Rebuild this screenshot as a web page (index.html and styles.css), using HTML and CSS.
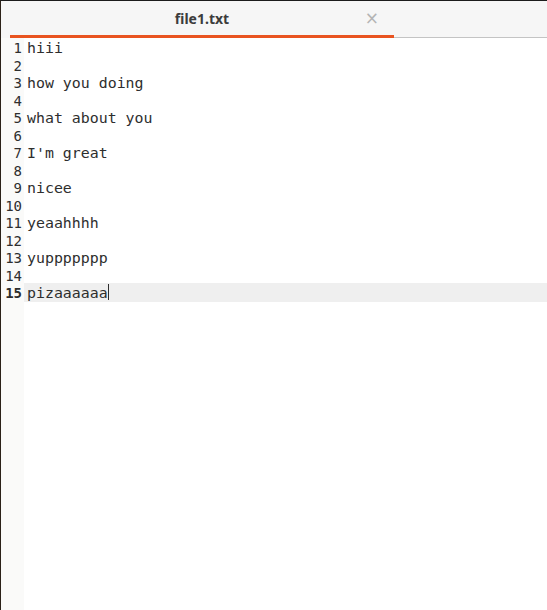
FILE: index.html
```html
<!DOCTYPE html>
<html>
<head>
<meta charset="utf-8">
<link rel="stylesheet" href="styles.css">
</head>
<body>
<div class="window">
  <div class="tabbar">
    <div class="tab">
      <span class="tab-title">file1.txt</span>
      <span class="tab-close">×</span>
    </div>
    <div class="tab-rest"></div>
  </div>
  <div class="editor">
    <div class="gutter">
      <div class="ln">1</div>
      <div class="ln">2</div>
      <div class="ln">3</div>
      <div class="ln">4</div>
      <div class="ln">5</div>
      <div class="ln">6</div>
      <div class="ln">7</div>
      <div class="ln">8</div>
      <div class="ln">9</div>
      <div class="ln">10</div>
      <div class="ln">11</div>
      <div class="ln">12</div>
      <div class="ln">13</div>
      <div class="ln">14</div>
      <div class="ln current">15</div>
    </div>
    <div class="text">
      <div class="line">hiii</div>
      <div class="line"></div>
      <div class="line">how you doing</div>
      <div class="line"></div>
      <div class="line">what about you</div>
      <div class="line"></div>
      <div class="line">I'm great</div>
      <div class="line"></div>
      <div class="line">nicee</div>
      <div class="line"></div>
      <div class="line">yeaahhhh</div>
      <div class="line"></div>
      <div class="line">yuppppppp</div>
      <div class="line"></div>
      <div class="line active">pizaaaaaa<span class="cursor"></span></div>
    </div>
  </div>
</div>
</body>
</html>
```
FILE: styles.css
```css
html, body {
  margin: 0;
  padding: 0;
  background: #ffffff;
}
.window {
  width: 547px;
  height: 610px;
  box-sizing: border-box;
  border-top: 1px solid #1c1c1c;
  border-left: 1px solid #2b2118;
  display: flex;
  flex-direction: column;
  overflow: hidden;
}
.tabbar {
  height: 37px;
  background: #f6f6f6;
  display: flex;
  align-items: stretch;
  flex-shrink: 0;
}
.tab {
  margin-left: 9px;
  width: 384px;
  box-sizing: border-box;
  border-bottom: 3px solid #e95420;
  display: flex;
  align-items: center;
  justify-content: center;
  position: relative;
}
.tab-title {
  font-family: "Noto Sans", "Open Sans", sans-serif;
  font-weight: bold;
  font-size: 14px;
  color: #3c3c3c;
}
.tab-close {
  position: absolute;
  right: 15px;
  top: 7px;
  font-family: "DejaVu Sans", sans-serif;
  font-size: 17px;
  color: #b4b4b4;
  line-height: 20px;
}
.tab-rest {
  flex: 1;
  border-bottom: 1px solid #c4c4c4;
}
.editor {
  flex: 1;
  display: flex;
  font-family: "DejaVu Sans Mono", monospace;
  font-size: 14.9px;
  line-height: 17.5px;
}
.gutter {
  width: 23px;
  background: #fafaf9;
  padding-top: 1px;
  flex-shrink: 0;
}
.ln {
  height: 17.5px;
  text-align: right;
  padding-right: 2px;
  padding-top: 1px;
  box-sizing: border-box;
  color: #2e2e2e;
  font-size: 14px;
}
.ln.current {
  font-weight: bold;
}
.text {
  flex: 1;
  padding-top: 1px;
}
.line {
  height: 17.5px;
  padding-left: 3px;
  padding-top: 1px;
  box-sizing: border-box;
  color: #2e2e2e;
  white-space: pre;
}
.line.active {
  background: #efefef;
  margin-top: -1px;
  height: 18.5px;
  padding-top: 2px;
}
.cursor {
  display: inline-block;
  width: 1px;
  height: 16px;
  background: #2e2e2e;
  vertical-align: top;
  margin-top: -1px;
}
```
